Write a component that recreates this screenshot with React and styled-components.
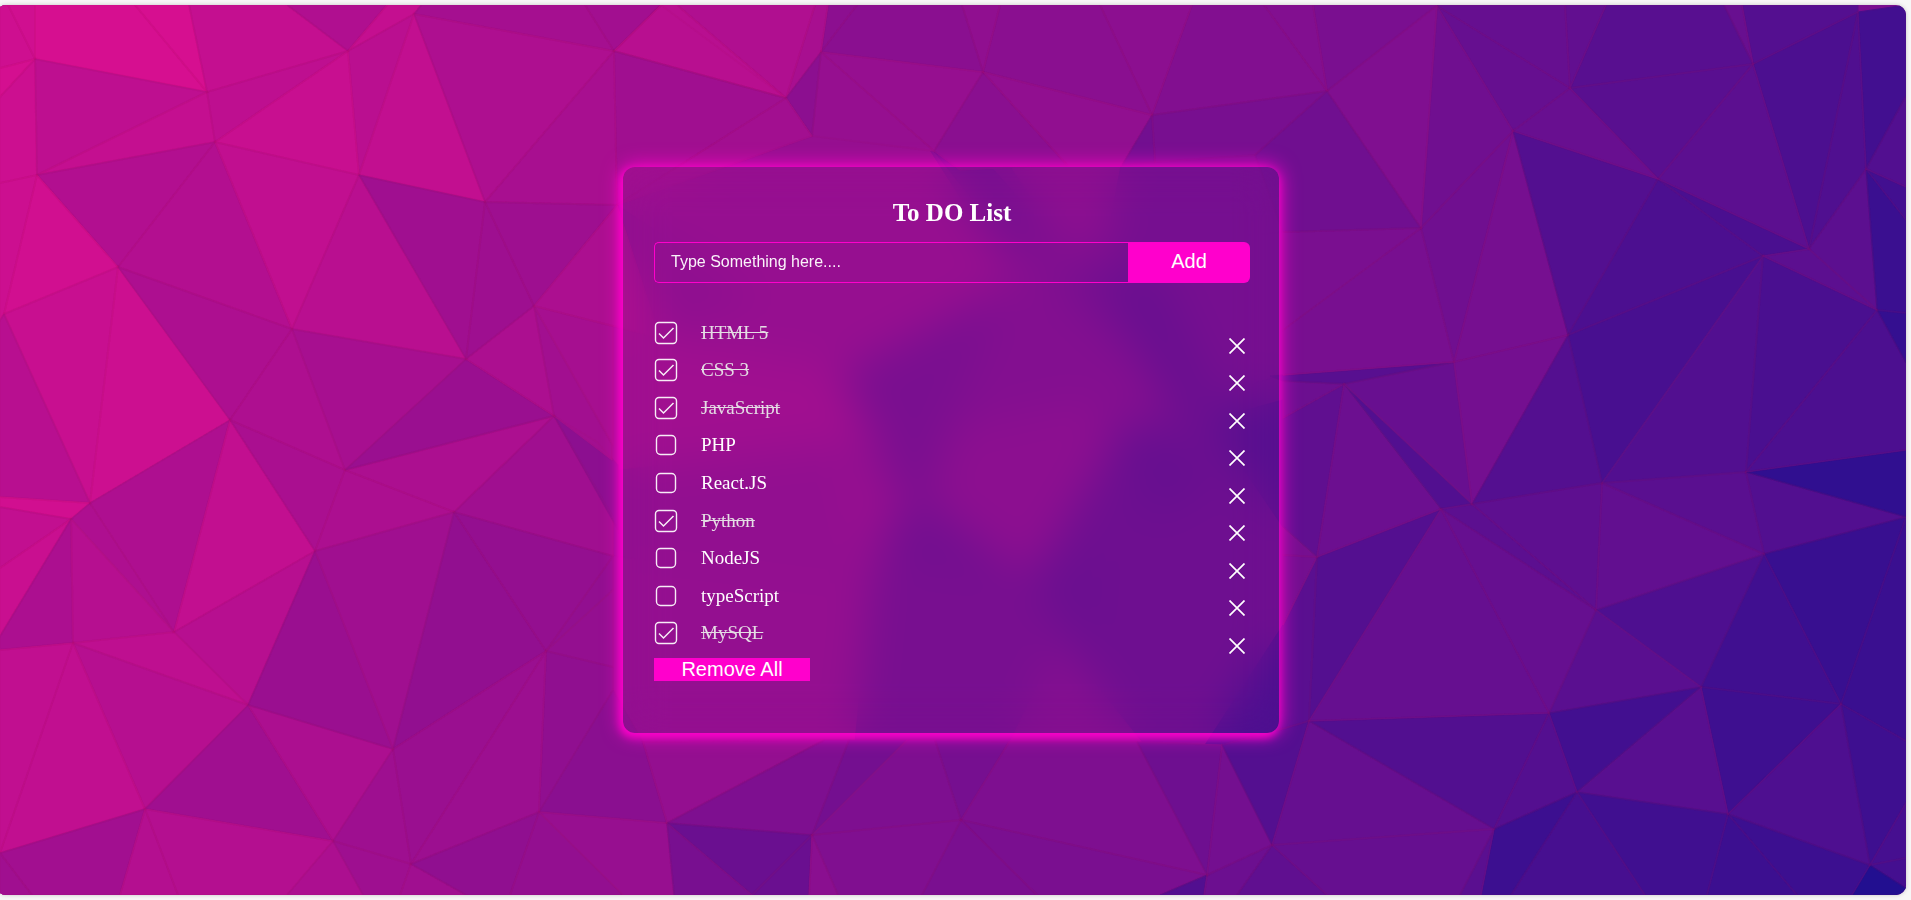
import React, { useState } from 'react';
import styled, { createGlobalStyle } from 'styled-components';

const GlobalStyle = createGlobalStyle`
  *, *::before, *::after { box-sizing: border-box; }
  body {
    margin: 0;
    background: #f7f7f7;
    font-family: "Liberation Serif", "Times New Roman", serif;
    overflow-x: hidden;
  }
`;

const Page = styled.div`
  min-height: 100vh;
  padding: 5px 5px 5px 0;
  display: flex;
  overflow: hidden;
`;

const Stage = styled.main`
  flex: 1;
  display: grid;
  margin-left: -4px;
  border-radius: 10px;
  overflow: hidden;
  background: #7a0f90;
  box-shadow: 0 0 4px rgba(0, 0, 0, 0.2);
`;

const Backdrop = styled.svg`
  grid-area: 1 / 1;
  width: 100%;
  height: 100%;
  min-height: 0;
  contain: size;
  display: block;
`;

const Center = styled.div`
  grid-area: 1 / 1;
  display: flex;
  align-items: center;
  justify-content: center;
  padding: 24px;
`;

const Card = styled.section`
  width: 100%;
  max-width: 656px;
  min-height: 566px;
  padding: 30px 29px 52px 31px;
  display: flex;
  flex-direction: column;
  border-radius: 12px;
  color: #fff;
  backdrop-filter: blur(20px);
  box-shadow: -2px 3px 8px 1px #ff00cc, 0 0 20px 1px #ff00cc;
`;

const Title = styled.h1`
  margin: 0 0 14px;
  font-size: 25px;
  line-height: 31px;
  font-weight: 700;
  text-align: center;
`;

const EntryForm = styled.form`
  display: flex;
  height: 41px;
  margin-bottom: 31px;
`;

const EntryInput = styled.input`
  flex: 1;
  min-width: 0;
  margin: 0;
  padding: 0 16px 2px;
  border: 1px solid #ff00cc;
  border-right: 0;
  border-radius: 5px 0 0 5px;
  background: transparent;
  color: #fff;
  font: 16px "Liberation Sans", Arial, sans-serif;
  outline: none;
  &::placeholder { color: #fff; opacity: 0.95; }
`;

const PinkButton = styled.button`
  border: 0;
  padding: 0;
  background: #ff00cc;
  color: #fff;
  font: 20px "Liberation Sans", Arial, sans-serif;
  line-height: 23px;
  cursor: pointer;
`;

const AddButton = styled(PinkButton)`
  width: 122px;
  padding-bottom: 2px;
  border-radius: 0 6px 6px 0;
`;

const RemoveButton = styled(PinkButton)`
  align-self: flex-start;
  width: 156px;
  height: 23px;
`;

const TaskList = styled.ul`
  list-style: none;
  margin: 0 0 6px;
  padding: 0;
  min-height: 338px;
  display: grid;
  grid-auto-rows: 1fr;
`;

const TaskRow = styled.li`
  display: flex;
  align-items: center;
  justify-content: space-between;
`;

const TaskLabel = styled.label`
  display: flex;
  align-items: center;
  gap: 23px;
  font-size: 19px;
  line-height: 22px;
  cursor: pointer;
`;

const TaskText = styled.span`
  color: ${(p) => (p.$done ? '#e4dce4' : '#fff')};
  text-decoration: ${(p) => (p.$done ? 'line-through' : 'none')};
`;

const Tick = styled.span`
  display: grid;
  width: 24px;
  height: 24px;
  & > * { grid-area: 1 / 1; }
  & > svg { pointer-events: none; }
`;

const TickInput = styled.input`
  appearance: none;
  width: 24px;
  height: 24px;
  margin: 0;
  cursor: pointer;
`;

const DeleteButton = styled.button`
  align-self: flex-end;
  border: 0;
  width: 24px;
  height: 24px;
  margin: 0 1px -6px 0;
  padding: 0;
  background: none;
  color: #fff;
  cursor: pointer;
  display: grid;
  place-items: center;
`;

/* Corner points of the low-poly mesh. */
const POINTS = {
  A: [35, 59], B: [207, 92], C: [37, 175], D: [215, 142], E: [348, 51], F: [414, 14], G: [359, 175],
  H: [485, 202], I: [118, 267], J: [4, 314], K: [292, 329], L: [466, 359], M: [230, 420], N: [345, 470],
  O: [90, 503], P: [71, 519], Q: [315, 551], R: [174, 632], S: [73, 643], T: [248, 705], U: [145, 809],
  V: [0, 853], W: [333, 841], X: [393, 749], Y: [454, 512], Z: [411, 864],
  a: [614, 51], b: [617, 205], c: [786, 98], d: [821, 52], e: [812, 136], f: [934, 151], g: [983, 72],
  h: [534, 306], i: [554, 416], j: [546, 651], k: [539, 812], l: [667, 823], m: [812, 835], n: [961, 820],
  o: [1207, 875], p: [1272, 845], q: [1309, 721], r: [1317, 557], s: [1441, 509], t: [1549, 713],
  u: [1494, 829], v: [1344, 384], w: [1454, 362], y: [1472, 504], z: [1596, 610],
  aa: [1602, 483], ab: [1568, 335], ac: [1763, 256], ad: [1746, 472], ae: [1877, 310], af: [1764, 554],
  ag: [1906, 517], ah: [1701, 687], ai: [1841, 704], aj: [1577, 792], ak: [1728, 814], al: [1870, 865],
  an: [1152, 115], ao: [1327, 91], ap: [1437, 6], aq: [1421, 228], ar: [1513, 131], as: [1570, 88],
  at: [1658, 179], au: [1809, 249], av: [1753, 64], aw: [1858, 12], ax: [1866, 169],
};

/* Each facet: its red value, then its corners (named, or as x,y). */
const FACETS = `
150 b 812,136 934,151 1000,240 1050,290 840,385 660,338
143 b 660,338 760,300
146 612,463 880,430 890,540 880,600 613,556
160 h 612,326 660,338 845,370 870,440 613,470
148 613,556 880,590 855,742 613,742
152 840,455 915,505 870,590
122 840,375 1020,280 960,400 925,510
131 1010,275 1080,310 1210,400 1120,460 1030,580 925,510 960,400
140 950,430 1090,400 1110,430 1030,590 930,510
118 1080,240 1283,232 1283,385 1190,400 1080,310
130 930,150 1100,160 1130,250 1080,310 1000,260
119 934,151 985,160 1065,250 1000,235
140 1000,150 1125,160 1105,250 1060,240
118 1122,160 1283,160 1283,232 1105,250
120 1050,285 1110,250 1105,320
106 1095,270 1160,270 1225,410 1180,430
110 1180,420 1210,395 1283,375 1283,742 1060,742 1030,580 1120,440
103 1115,430 1160,425 1220,480 1150,520
88 1210,420 1283,400 1283,527
120 890,510 925,510 1035,580 1110,742 855,742 870,590
115 925,500 1030,580 890,560
132 1060,640 1143,744 1009,744
106 1030,575 1100,560 1090,640
78 1205,745 1283,625 1283,745
206 0,5 8,5 A 0,68
208 8,5 35,5 A
214 35,5 135,5 B A
214 135,5 189,5 B
212 0,68 A 0,97
204 0,97 A C 0,183
190 A B C
196 C B D
196 B 189,5 287,5 E
190 B E D
176 287,5 387,5 E
196 387,5 421,5 F E
186 E F G
200 D E G
194 F H G
165 F 421,5 585,5 a
174 F a H
178 C D I
179 I D K
193 D G K
185 G L K
160 G H L
204 0,183 C J 0,320
209 C I J
200 J I O
204 I M O
184 0,320 J O 0,497
173 I K M
174 K N M
167 K L N
209 0,497 O P 0,507
194 0,507 P 0,568
201 0,568 P 0,636
172 0,636 P S 0,650
174 O P R
174 O M R
182 P S R
194 M Q R
170 M N Q
172 N Y Q
172 N i Y
154 L i N
172 L h i
158 H h L
190 S R T
183 R Q T
182 S T U
193 V S U
193 0,650 S V
160 U T W
172 T X W
154 T Q X
160 Q Y X
162 V U 120,895 32,895
160 V 32,895 0,895
180 U 120,895 178,895
180 U W 287,895 178,895
172 W 287,895 363,895
158 W Z 400,895 363,895
160 Z 400,895 466,895
158 W X Z
146 Y j X
160 Y i 613,517 613,556
140 i 597,442 618,465 618,530
162 i h 612,445 612,460
166 h 613,326 613,445
148 Y 613,556 j
146 j 613,556 613,590
148 j 613,590 613,667
144 j 613,667 613,690 k
138 k 613,690 643,742 l
154 X j Z
156 j k Z
144 Z k 510,895 466,895
147 k 510,895 623,895
151 k l 674,895 623,895
148 l 643,742 824,740
126 l 824,740 849,740 m
106 l m 752,895
120 l 752,895 674,895
106 m 752,895 809,895
138 m 809,895 838,895
128 m 838,895 922,895 n
116 m 849,740 907,740
126 m 907,740 935,740 n
118 n 935,740 1009,742
126 n 1009,742 1137,742 o
122 n o 1160,895 1037,895
122 n 1037,895 922,895
110 o 1137,742 1222,745
116 o 1222,745 p
82 o 1160,895 1204,895
108 o 1204,895 1237,895 p
84 p 1222,745 1279,730 q
102 p q u
96 p 1237,895 1327,895
102 p 1327,895 1460,895 u
82 q t u
90 q r 1283,625 1279,730
115 r 1283,555 1283,625
118 r 1283,527 1283,555
96 r v 1283,418 1283,527
108 v 1283,381 1283,418
84 r s q
102 s t q
102 s z t
108 r v s
82 v s y
104 v y w
88 1270,376 w v 1283,381
122 1283,232 aq 1283,330
120 1283,330 aq w 1283,375
112 w aq ar
118 w ar ab
116 w ab y
92 s y z
94 y aa z
98 aa af z
90 aa ad af
82 ad ag af
48 ad 1906,450 ag
78 af ah z
90 z ah t
56 af ag ai
64 af ah ai
58 ag 1906,741 ai
62 ah ai ak
88 ah ak aj
66 t ah aj
84 t aj u
78 ai al ak
62 ai 1906,741 1906,803 al
70 al 1906,803 1906,858
68 al 1906,858 1906,888
34 al 1906,888 1906,895 1852,895
60 ak al 1852,895 1797,895
60 ak 1797,895 1707,895
64 aj ak 1707,895 1645,895
71 aj 1645,895 1511,895
60 u aj 1511,895 1481,895
90 u 1481,895 1460,895
84 y ab aa
72 aa ab ac
82 aa ac ad
74 ac ae ad
76 ad ae 1906,363 1906,450
52 ae 1906,313 1906,363
83 ar at ab
76 ab at ac
74 at au ac
92 ac au ae
92 au ax ae
58 ax 1906,220 1906,313 ae
66 ax 1906,187 1906,220
82 ax 1906,96 1906,187
66 aw 1906,5 1906,96 ax
80 aw ax au
76 av aw au
84 av 1742,5 1858,5 aw
104 av 1724,5 1742,5
88 as 1606,5 1724,5 av
98 as 1565,5 1606,5
89 as av at
92 at av au
104 ar as at
102 ap as ar
102 ap 1437,5 1565,5 as
112 ap ar aq
128 ao ap aq
122 ao 1313,5 1437,5
130 ao 1264,5 1313,5
130 an 1192,5 1264,5 ao
140 an 1100,5 1192,5
138 g 1000,5 1100,5 an
144 g 962,5 1000,5
138 d 857,5 962,5 g
140 d 828,5 857,5
168 c 815,5 828,5 d
176 c 677,5 815,5
184 a 661,5 677,5 c
162 a 585,5 661,5
184 a 661,5 c
160 a c b
168 H a b
158 H b h
172 h b 660,338
150 d g f
150 d e f
140 c d e
162 b c e
138 g f 960,170 1067,165
145 g an 1122,165 1067,165
114 an 1122,165 1155,162
120 an ao 1255,155 1155,162
112 ao aq 1283,232 1255,155
`.trim().split('\n').map((line) => {
  const [red, ...corners] = line.split(' ');
  return {
    fill: `rgb(${red}, 15, 144)`,
    points: corners.map((c) => (POINTS[c] ? POINTS[c].join(',') : c)).join(' '),
  };
});

const LowPoly = () => (
  <Backdrop viewBox="-4 5 1910 890" preserveAspectRatio="none" aria-hidden="true">
    <rect x="-4" y="5" width="8" height="890" fill="#c80f90" />
    {FACETS.map((facet, index) => (
      <polygon
        key={index}
        points={facet.points}
        fill={facet.fill}
        stroke={facet.fill}
        strokeWidth="1"
      />
    ))}
    {FACETS.slice(24).map((facet, index) => (
      <polygon
        key={index}
        points={facet.points}
        fill="none"
        stroke="#b00a50"
        strokeOpacity="0.06"
        strokeWidth="2"
      />
    ))}
  </Backdrop>
);

const TickIcon = ({ checked }) => (
  <svg width="24" height="24" viewBox="0 0 24 24" fill="none" stroke="#fff" strokeOpacity="0.92">
    {checked ? (
      <>
        <rect x="1.5" y="1.5" width="21" height="21" rx="3.5" strokeWidth="1.4" />
        <path d="M5 12.5 L9.5 17 L19.5 7" strokeWidth="1.5" />
      </>
    ) : (
      <rect x="2.5" y="2.5" width="19" height="19" rx="4" strokeWidth="1.4" />
    )}
  </svg>
);

const CrossIcon = () => (
  <svg width="16" height="16" viewBox="0 0 16 16" fill="none" stroke="currentColor" strokeWidth="1.7">
    <path d="M0.5 0.5 L15.5 15.5 M15.5 0.5 L0.5 15.5" />
  </svg>
);

const INITIAL_TASKS = [
  { text: 'HTML 5', done: true },
  { text: 'CSS 3', done: true },
  { text: 'JavaScript', done: true },
  { text: 'PHP', done: false },
  { text: 'React.JS', done: false },
  { text: 'Python', done: true },
  { text: 'NodeJS', done: false },
  { text: 'typeScript', done: false },
  { text: 'MySQL', done: true },
].map((task, id) => ({ ...task, id }));

export default function App() {
  const [tasks, setTasks] = useState(INITIAL_TASKS);
  const [draft, setDraft] = useState('');

  const addTask = (event) => {
    event.preventDefault();
    if (!draft.trim()) return;
    setTasks([...tasks, { id: Date.now(), text: draft.trim(), done: false }]);
    setDraft('');
  };
  const toggle = (id) => setTasks(tasks.map((t) => (t.id === id ? { ...t, done: !t.done } : t)));
  const remove = (id) => setTasks(tasks.filter((t) => t.id !== id));

  return (
    <Page>
      <GlobalStyle />
      <Stage>
        <LowPoly />
        <Center>
          <Card>
            <Title>To DO List</Title>
            <EntryForm onSubmit={addTask}>
              <EntryInput
                type="text"
                aria-label="New task"
                placeholder="Type Something here...."
                value={draft}
                onChange={(event) => setDraft(event.target.value)}
              />
              <AddButton type="submit">Add</AddButton>
            </EntryForm>
            <TaskList>
              {tasks.map((task) => (
                <TaskRow key={task.id}>
                  <TaskLabel>
                    <Tick>
                      <TickInput type="checkbox" checked={task.done} onChange={() => toggle(task.id)} />
                      <TickIcon checked={task.done} />
                    </Tick>
                    <TaskText $done={task.done}>{task.text}</TaskText>
                  </TaskLabel>
                  <DeleteButton type="button" aria-label={`Delete ${task.text}`} onClick={() => remove(task.id)}>
                    <CrossIcon />
                  </DeleteButton>
                </TaskRow>
              ))}
            </TaskList>
            <RemoveButton type="button" onClick={() => setTasks([])}>Remove All</RemoveButton>
          </Card>
        </Center>
      </Stage>
    </Page>
  );
}
